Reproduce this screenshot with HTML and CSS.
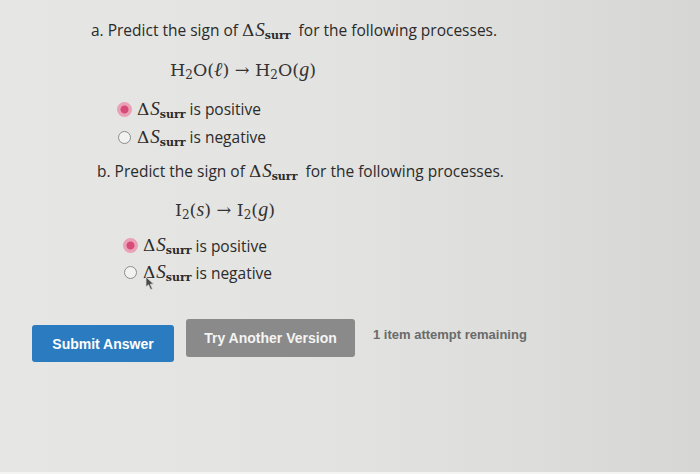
FILE: index.html
```html
<!DOCTYPE html>
<html lang="en">
<head>
    <meta charset="UTF-8">
    <title>Predict the sign</title>
    <link rel="stylesheet" href="styles.css">
</head>
<body>
    <div class="page">
        <div class="part part-a">
            <p class="prompt">a. Predict the sign of <span class="ds">&Delta;<i>S</i><sub>surr</sub></span> for the following processes.</p>
            <p class="equation">H<sub>2</sub>O(<i>&#8467;</i>) &rarr; H<sub>2</sub>O(<i>g</i>)</p>
            <ul class="choices">
                <li><span class="radio checked"></span><span class="ds">&Delta;<i>S</i><sub>surr</sub></span> is positive</li>
                <li><span class="radio"></span><span class="ds">&Delta;<i>S</i><sub>surr</sub></span> is negative</li>
            </ul>
        </div>

        <div class="part part-b">
            <p class="prompt">b. Predict the sign of <span class="ds">&Delta;<i>S</i><sub>surr</sub></span> for the following processes.</p>
            <p class="equation">I<sub>2</sub>(<i>s</i>) &rarr; I<sub>2</sub>(<i>g</i>)</p>
            <ul class="choices">
                <li><span class="radio checked"></span><span class="ds">&Delta;<i>S</i><sub>surr</sub></span> is positive</li>
                <li class="has-cursor">
                    <span class="radio"></span><span class="ds">&Delta;<i>S</i><sub>surr</sub></span> is negative
                    <!-- mouse pointer resting over the option -->
                    <svg class="cursor" width="10" height="15" viewBox="0 0 10 15">
                        <path d="M1 1 L1 11 L3.5 8.8 L5.6 13.6 L7.4 12.8 L5.3 8.2 L8.6 8 Z" fill="#4a4a4c" stroke="#d8d8d8" stroke-width="0.8"/>
                    </svg>
                </li>
            </ul>
        </div>

        <div class="actions">
            <button class="btn btn-submit">Submit Answer</button>
            <button class="btn btn-retry">Try Another Version</button>
            <span class="attempts">1 item attempt remaining</span>
        </div>
    </div>
</body>
</html>
```

FILE: styles.css
```css
body {
    margin: 0;
    height: 472px;
    border-bottom: 2px solid #f4f4f2;
    background: linear-gradient(90deg, #e6e6e4 0%, #e3e3e1 45%, #dddddb 75%, #d6d6d4 100%);
    font-family: "Open Sans", sans-serif;
    color: #2b2b2b;
    overflow: hidden;
}
.page {
    padding-top: 18px;
}
.part {
    margin: 0;
}
.part-a {
    padding-left: 91px;
}
.part-b {
    padding-left: 97px;
    margin-top: 8px;
}
.prompt {
    margin: 0;
    font-size: 15.5px;
    line-height: 24px;
}
.ds {
    font-family: "DejaVu Serif", "Liberation Serif", serif;
    font-size: 17px;
}
.ds i {
    font-family: "Liberation Serif", serif;
    font-size: 19px;
    margin-left: 1px;
}
.ds sub {
    font-size: 11px;
    font-family: "DejaVu Serif", serif;
    font-weight: bold;
    vertical-align: -3px;
    margin-right: 4px;
}
.equation {
    margin: 8px 0 0 79px;
    font-family: "DejaVu Serif", "Liberation Serif", serif;
    font-size: 17.5px;
    line-height: 26px;
    color: #333;
}
.part-b .equation {
    margin: 7px 0 0 78px;
}
.equation sub {
    font-size: 12px;
    vertical-align: -3px;
}
.equation i {
    font-family: "Liberation Serif", serif;
    font-size: 20px;
}
.choices {
    list-style: none;
    margin: 7px 0 0 27px;
    padding: 0;
}
.part-b .choices {
    margin-top: 4px;
}
.choices li {
    display: flex;
    align-items: center;
    height: 28px;
    font-size: 15.5px;
}
.part-b .choices li {
    height: 27px;
}
.has-cursor {
    position: relative;
}
.cursor {
    position: absolute;
    left: 21px;
    top: 17px;
}
.radio {
    width: 13px;
    height: 13px;
    border: 1px solid #8c8c8c;
    border-radius: 50%;
    background: #f2f2f0;
    margin-right: 6px;
    box-sizing: border-box;
}
.radio.checked {
    border: 2px solid #eba0b6;
    background: radial-gradient(circle, #d84a78 0 3.5px, #e9a3b8 4.5px);
    width: 15px;
    height: 15px;
    margin-left: -1px;
    margin-right: 5px;
}
.actions {
    display: flex;
    align-items: center;
    margin: 27px 0 0 32px;
}
.btn {
    border: none;
    border-radius: 3px;
    color: #fff;
    font-family: "Liberation Sans", Arial, sans-serif;
    font-weight: bold;
    font-size: 14px;
    height: 37px;
}
.btn-submit {
    background: #2b7bc0;
    width: 142px;
    margin-top: 12px;
}
.btn-retry {
    background: #8a8a8a;
    width: 169px;
    height: 38px;
    margin-left: 12px;
    margin-top: 0;
    color: #f4f4f4;
}
.attempts {
    margin-left: 18px;
    margin-top: -6px;
    font-family: "Liberation Sans", Arial, sans-serif;
    font-weight: bold;
    font-size: 13px;
    color: #6a6a6a;
}
```
